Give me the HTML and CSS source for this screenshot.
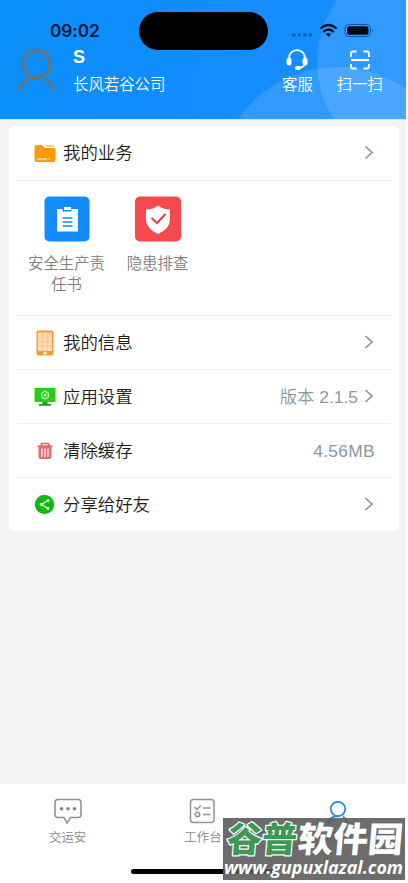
FILE: index.html
```html
<!DOCTYPE html>
<html lang="zh-CN">
<head>
<meta charset="utf-8">
<title>我的</title>
<link rel="stylesheet" href="styles.css">
</head>
<body>
<div class="screen">
  <header class="header">
    <svg class="header-bg" viewBox="0 0 406 119"><circle cx="422" cy="62" r="105" fill="#fff" fill-opacity=".12"/><circle cx="337" cy="187" r="120" fill="#fff" fill-opacity=".12"/></svg>
    <div class="island"></div>
    <div class="status">
      <span class="time">09:02</span>
      <svg class="signals" width="86" height="18" viewBox="0 0 86 18">
        <g fill="#0b62b4"><rect x="1" y="11.5" width="3.5" height="3" rx="1"/><rect x="6.500" y="11.500" width="3.500" height="3" rx="1"/><rect x="12" y="11.500" width="3.500" height="3" rx="1"/><rect x="17.500" y="11.500" width="3.500" height="3" rx="1"/></g>
        <g fill="none" stroke="#001225" stroke-width="2.300"><path d="M29.500 6.500Q37.500-.5 45.500 6.500"/><path d="M32.300 9.800Q37.500 5.200 42.700 9.800"/></g>
        <path d="M34.800 12Q37.500 9.800 40.200 12L37.500 14.800Z" fill="#001225"/>
        <rect x="54" y="2.500" width="25.500" height="12" rx="4" fill="none" stroke="#0b57a4"/>
        <rect x="56" y="4.300" width="21.500" height="8.400" rx="2.500" fill="#000a16"/><path d="M81 6.500q2 2 0 4z" fill="#0b57a4"/>
      </svg>
    </div>
    <svg class="avatar" width="40" height="46" viewBox="0 0 40 46" fill="none" stroke="#68727b" stroke-width="3.300" stroke-linecap="round"><circle cx="19.500" cy="18" r="13.700"/><path d="M2.500 43Q8 30.500 19.500 31.700M29.500 34Q34 37.500 36.500 43"/></svg>
    <div class="user"><div class="name">S</div><div class="company">长风若谷公司</div></div>
    <div class="action service">
      <svg width="24" height="24" viewBox="0 0 24 24"><path d="M4 12V10.500C4 5.500 7.500 2.200 12 2.200S20 5.500 20 10.500V14Q20 19 14 20" fill="none" stroke="#fff" stroke-width="1.800"/><rect x="1.500" y="9.500" width="5" height="8" rx="2.500" fill="#fff"/><rect x="17.500" y="9.500" width="5" height="8" rx="2.500" fill="#fff"/><rect x="10" y="18" width="6" height="4" rx="2" fill="#fff"/></svg>
      <span>客服</span>
    </div>
    <div class="action scan">
      <svg width="24" height="24" viewBox="0 0 24 24" fill="none" stroke="#fff" stroke-width="1.800"><path d="M3 9V5.500Q3 3.500 5 3.500H8.500M15.500 3.500H19Q21 3.500 21 5.500V9M3 16V18.500Q3 20.500 5 20.500H8.500M15.500 20.500H19Q21 20.500 21 18.500V16M3 12H21"/></svg>
      <span>扫一扫</span>
    </div>
  </header>

  <main class="card">
    <div class="row first">
      <svg class="icon" width="22" height="26" viewBox="0 0 22 26"><path d="M.5 7Q.5 5 2.500 5H8L11 8H19.500Q21.500 8 21.500 10V20Q21.500 22 19.500 22H2.500Q.5 22 .5 20Z" fill="#fb9a0a"/><path d="M11 5H19Q20 5 20.300 7H12.500Z" fill="#fdcf91"/><path d="M3 19H13M14.500 19H15.500" stroke="#fee3ba" stroke-width="1.500"/></svg>
      <span class="label">我的业务</span>
      <svg class="chev" width="10" height="16" viewBox="0 0 10 16"><path d="M1.500 1.500L8 7.500L1.500 13.500"/></svg>
    </div>
    <div class="apps">
      <div class="app"><svg width="46" height="46" viewBox="0 0 46 46"><rect x=".5" y=".5" width="45" height="45" rx="5" fill="#138bfa"/><path d="M13 13H18.500V15.500H27.500V13H34V35.500H13Z" fill="#fff"/><path d="M20 11H27V14H20Z" fill="#fff"/><path d="M18.500 22H28.500M18.500 26H28.500M18.500 30H28.500" stroke="#138bfa" stroke-width="1.500"/></svg><span>安全生产责任书</span></div>
      <div class="app"><svg width="46" height="46" viewBox="0 0 46 46"><rect x="0" y=".5" width="46" height="45" rx="5" fill="#f6494e"/><path d="M23 9.500Q28 13.500 35 13.500V24Q34.500 33 23 38Q11.500 33 11 24V13.500Q18 13.500 23 9.500Z" fill="#fff"/><path d="M16.500 22L22 27L30.500 18" fill="none" stroke="#d74449" stroke-width="2"/></svg><span>隐患排查</span></div>
    </div>
    <div class="row">
      <svg class="icon" width="22" height="26" viewBox="0 0 22 26"><rect x="2.500" y=".5" width="17" height="25" rx="2" fill="#f59b32"/><rect x="4" y="2.500" width="14" height="18.500" fill="#ffdab5"/><path d="M4 7H18M4 11.500H18M4 16H18M8.500 2.500V21M13.500 2.500V21" stroke="#fac38b" stroke-width=".8"/><circle cx="11" cy="23.200" r="1.400" fill="#fff"/></svg>
      <span class="label">我的信息</span>
      <svg class="chev" width="10" height="16" viewBox="0 0 10 16"><path d="M1.500 1L8 7L1.500 13"/></svg>
    </div>
    <div class="row">
      <svg class="icon" width="22" height="26" viewBox="0 0 22 26"><rect x=".5" y="4" width="21" height="14" rx="1" fill="#25cf19"/><path d="M8.500 18H13.500V20H17V21.700H5V20H8.500Z" fill="#249c20"/><path d="M11 7.200L14.300 9.100V13L11 15L7.700 13V9.100Z" fill="none" stroke="#b7f5b2" stroke-width="1.400"/><circle cx="11" cy="11" r="1.500" fill="#d5ffd2"/></svg>
      <span class="label">应用设置</span><span class="value">版本 2.1.5</span>
      <svg class="chev" width="10" height="16" viewBox="0 0 10 16"><path d="M1.500 1L8 7L1.500 13"/></svg>
    </div>
    <div class="row">
      <svg class="icon" width="22" height="26" viewBox="0 0 22 26"><path d="M4.500 8H17.500V18.500Q17.500 21 15.500 21H6.500Q4.500 21 4.500 18.500Z" fill="#ec6a72"/><path d="M3.500 8H18.500M7.500 7.500V5.500H14.500V7.500" fill="none" stroke="#e8616a" stroke-width="1.700"/><path d="M8 10.500V19M11 10.500V19M14 10.500V19" stroke="#fff" stroke-width="1.200"/></svg>
      <span class="label">清除缓存</span><span class="value size">4.56MB</span>
    </div>
    <div class="row">
      <svg class="icon" width="22" height="26" viewBox="0 0 22 26"><circle cx="10.500" cy="12.500" r="9.700" fill="#0cbd0c"/><path d="M14 8.500L7.500 12.500L14 16.500" fill="none" stroke="#d9ffda" stroke-width="1.400"/><g fill="#eaffea"><circle cx="14" cy="8.500" r="1.400"/><circle cx="7.500" cy="12.500" r="1.700"/><circle cx="14" cy="16.500" r="1.400"/></g></svg>
      <span class="label">分享给好友</span>
      <svg class="chev" width="10" height="16" viewBox="0 0 10 16"><path d="M1.500 1L8 7L1.500 13"/></svg>
    </div>
  </main>

  <nav class="tabs">
    <div class="tab"><svg width="30" height="28" viewBox="0 0 30 28"><path d="M5 2.500H25Q28 2.500 28 5.500V17.500Q28 20.500 25 20.500H17.500L14 26L11 20.500H5Q2 20.500 2 17.500V5.500Q2 2.500 5 2.500Z" fill="none" stroke="#929292" stroke-width="1.600"/><g fill="#858585"><circle cx="8.500" cy="11.800" r="1.800"/><circle cx="15" cy="11.800" r="1.800"/><circle cx="21.500" cy="11.800" r="1.800"/></g></svg><span>交运安</span></div>
    <div class="tab"><svg width="30" height="28" viewBox="0 0 30 28" fill="none" stroke="#929292" stroke-width="1.500"><rect x="2.500" y="2.500" width="23.500" height="23" rx="3"/><path d="M6.500 10L9 12.500L13 8.500M15 11H22.500M15 17.500H22.500"/><circle cx="9.500" cy="17.500" r="2.200"/></svg><span>工作台</span></div>
    <div class="tab active"><svg width="30" height="28" viewBox="0 0 30 28" fill="none" stroke="#2189ed" stroke-width="1.700" stroke-linecap="round"><circle cx="15" cy="12" r="7.200"/><path d="M5.500 26Q7 19 15 19.200M20.500 20Q23.500 22 24.500 26"/></svg><span>我的</span></div>
  </nav>
  <div class="home-bar"></div>
  <div class="watermark">
    <svg width="182" height="62" viewBox="0 0 182 62"><g class="brand" transform="translate(3 34) skewX(-5)"><text class="green" x="0" y="0" textLength="70">谷普</text><text class="white" x="71" y="0" textLength="105">软件园</text></g><text class="url" x="1" y="56" textLength="179" lengthAdjust="spacingAndGlyphs">www.gupuxlazal.com</text></svg>
  </div>
</div>
</body>
</html>
```
FILE: styles.css
```css
* { box-sizing: border-box; }
body { margin: 0; background: #fff; font-family: "Liberation Sans", "Noto Sans CJK SC", sans-serif; font-weight: 350; }
svg { display: block; flex: none; }
.screen { position: relative; width: 406px; height: 883px; display: flex; flex-direction: column; background: #f4f4f4; }
.header { position: relative; height: 120px; flex: none; display: flex; padding-top: 46px; color: #fff; background: linear-gradient(100deg, #098ffa, #158cff 60%); border-bottom: 1px solid #c9ebff; }
.header-bg { position: absolute; left: 0; top: 0; width: 406px; height: 119px; }
.island { position: absolute; left: 139px; top: 12px; width: 129px; height: 38px; border-radius: 19px; background: #000; }
.status { position: absolute; left: 50px; top: 20px; width: 325px; display: flex; justify-content: space-between; align-items: center; color: #001736; }
.time { font: 600 17.300px/22px Inter, sans-serif; letter-spacing: -.1px; }
.signals { margin-right: -2px; }
.avatar { position: relative; margin-left: 17px; }
.user { position: relative; margin-left: 16px; width: 110px; font-size: 15.400px; }
.name { font: bold 18px/22px "Liberation Sans", sans-serif; }
.company { line-height: 22px; margin-top: 6px; white-space: nowrap; }
.action { position: relative; display: flex; flex-direction: column; align-items: center; font-size: 15.400px; white-space: nowrap; padding-top: 2px; }
.action span { line-height: 22px; margin-top: 2px; }
.service { margin-left: 99px; }
.scan { margin-left: 24px; }
.card { width: 390px; height: 405px; margin: 6px 0 0 9px; background: #fff; border-radius: 5px; flex: none; }
.row { height: 54px; margin: 0 8px; padding: 0 17px; display: flex; align-items: center; border-bottom: 1px solid #ededed; }
.first { height: 55px; }
.row:last-child { border: 0; }
.label { margin-left: 7px; font-size: 17.400px; line-height: 26px; color: #1c1c1c; }
.chev { margin-left: auto; fill: none; stroke: #89959b; stroke-width: 1.700; }
.value { margin-left: auto; font-size: 17.400px; line-height: 26px; color: #8998a2; }
.value + .chev { margin-left: 6px; }
.size { margin-right: -1px; letter-spacing: .3px; }
.apps { height: 135px; margin: 0 8px; padding: 15px 0 0 4px; display: flex; border-bottom: 1px solid #ededed; }
.app { width: 91px; display: flex; flex-direction: column; align-items: center; }
.app span { width: 78px; margin-top: 11px; color: #808080; font-size: 15.400px; line-height: 21px; text-align: center; }
.tabs { margin-top: auto; height: 99px; background: #fff; display: flex; padding-top: 13px; }
.tab { width: 135.300px; display: flex; flex-direction: column; align-items: center; font-size: 12.400px; color: #858585; }
.tab span { line-height: 18px; margin-top: 4px; }
.active { color: #2189ed; }
.home-bar { position: absolute; left: 131px; top: 869px; width: 143px; height: 5px; border-radius: 3px; background: #000; }
.watermark { position: absolute; left: 223px; top: 818px; width: 182px; height: 62px; background: rgba(88, 88, 88, .88); }
.brand { font: 900 35px "Noto Sans CJK SC", sans-serif; paint-order: stroke; stroke-linejoin: round; }
.green { fill: #3b9952; stroke: #fff; stroke-width: 2.500px; }
.white { fill: #fff; }
.url { font: italic 700 18px "Open Sans", sans-serif; fill: #fff; }
```
